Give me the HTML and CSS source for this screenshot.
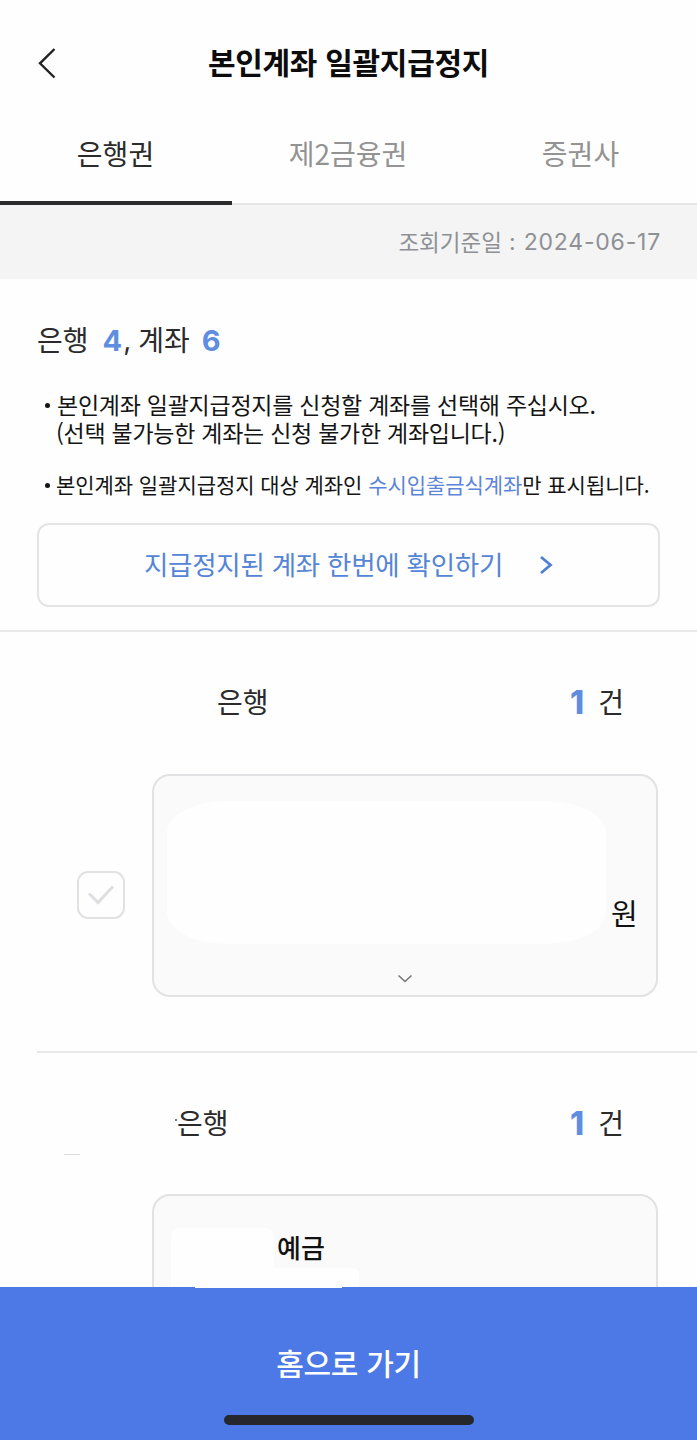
FILE: index.html
```html
<!DOCTYPE html>
<html lang="ko">
<head>
<meta charset="utf-8">
<title>본인계좌 일괄지급정지</title>
<link rel="stylesheet" href="styles.css">
</head>
<body>
<div class="screen">
  <header class="header">
    <svg class="back" width="20" height="32" viewBox="0 0 20 32"><path d="M17.5 2 3 16.3 17.5 30.5"/></svg>
    <h1 class="title">본인계좌 일괄지급정지</h1>
  </header>
  <nav class="tabs">
    <span class="tab tab-active">은행권</span>
    <span class="tab">제2금융권</span>
    <span class="tab">증권사</span>
  </nav>
  <div class="date-bar"><span>조회기준일</span><span class="date">: 2024-06-17</span></div>
  <section class="intro">
    <div class="summary"><span class="label">은행</span><b class="count">4</b><span class="comma">,</span><span class="label">계좌</span><b class="count count-last">6</b></div>
    <ul class="notes">
      <li class="note"><i class="dot"></i><div><p>본인계좌 일괄지급정지를 신청할 계좌를 선택해 주십시오.</p><p class="note-sub">(선택 불가능한 계좌는 신청 불가한 계좌입니다.)</p></div></li>
      <li class="note note-small"><i class="dot"></i><p>본인계좌 일괄지급정지 대상 계좌인 <span class="link">수시입출금식계좌</span>만 표시됩니다.</p></li>
    </ul>
    <a class="check-all">
      <span class="check-label">지급정지된 계좌 한번에 확인하기</span>
      <svg width="14" height="20" viewBox="0 0 14 20"><path d="M2 2 11.5 10 2 18"/></svg>
    </a>
  </section>
  <main class="banks">
    <section class="bank">
      <div class="bank-head"><span class="bank-name label">은행</span><b class="count bank-count">1</b><span class="label">건</span></div>
      <div class="account-row">
        <svg class="checkbox" width="48" height="48" viewBox="0 0 48 48"><rect x="1" y="1" width="46" height="46" rx="10"/><path d="M12 22.5 21 31.5 36 15.5"/></svg>
        <div class="card">
          <div class="blank"></div>
          <span class="won">원</span>
          <svg class="expand" width="16" height="10" viewBox="0 0 16 10"><path d="M1.5 1.5 8 7.5 14.5 1.5"/></svg>
        </div>
      </div>
    </section>
    <section class="bank bank-second">
      <div class="bank-head"><i class="speck"></i><span class="bank-name label">은행</span><b class="count bank-count">1</b><span class="label">건</span></div>
      <i class="sliver"></i>
      <div class="account-row">
        <div class="card">
          <div class="deposit"><div class="blank-name"></div><span>예금</span></div>
          <div class="blank-number"></div>
        </div>
      </div>
    </section>
  </main>
  <footer class="footer">
    <i class="edge"></i>
    <span class="home">홈으로 가기</span>
    <i class="indicator"></i>
  </footer>
</div>
</body>
</html>
```

FILE: styles.css
```css
* { box-sizing: border-box; margin: 0; padding: 0; }
body {
  background: #fefefe;
  color: #2b2b2b;
  font-family: "Noto Sans CJK KR", sans-serif;
  white-space: nowrap;
}
svg { display: block; flex: none; fill: none; }
.screen { width: 697px; height: 1440px; overflow: hidden; display: flex; flex-direction: column; }

.header { height: 128px; flex: none; display: grid; grid-template-columns: 60px 1fr 60px; align-items: center; padding-bottom: 2px; }
.back { margin-left: 37px; stroke: #222; stroke-width: 2.4; }
.title { text-align: center; font-size: 30px; font-weight: 700; line-height: 40px; letter-spacing: -.3px; color: #0c0c0c; padding-bottom: 4px; }

.tabs { height: 77px; flex: none; display: grid; grid-template-columns: 232px 1fr 232px; }
.tab { border-bottom: 2px solid #e6e6e6; padding: 4px 1px 0 0; text-align: center; font-size: 28px; line-height: 42px; color: #939393; }
.tab-active { color: #2b2b2b; border-bottom: 4px solid #2b2b2e; }

.date-bar { height: 74px; flex: none; background: #f4f4f4; padding: 0 36px 2px 0; display: flex; align-items: center; justify-content: flex-end; gap: 7px; font-size: 22.5px; color: #8e9094; }
.date { font-family: Inter, sans-serif; font-size: 23px; letter-spacing: .8px; padding-top: 2px; }

.intro { height: 353px; flex: none; padding: 40px 37px 0; border-bottom: 2px solid #e8e8e8; }
.summary { display: flex; align-items: center; height: 42px; font-size: 28px; line-height: 42px; }
.label { position: relative; top: -2px; }
.summary .label { top: -1px; }
.count { font: 700 29px/42px Inter, sans-serif; color: #5f8ee0; margin: 1px 0 0 14px; }
.count-last { margin-left: 12px; }
.comma { font-family: Inter, sans-serif; margin: 0 7px 0 1px; }
.notes { list-style: none; margin-top: 29px; color: #141414; }
.note { display: flex; font-size: 23px; line-height: 28px; letter-spacing: -.26px; padding-left: 8px; }
.note-sub { margin-left: -1px; }
.note-small { font-size: 21px; letter-spacing: -.06px; margin-top: 24px; }
.dot { width: 5px; height: 5px; border-radius: 50%; background: #141414; margin: 13px 7px 0 0; flex: none; }
.note-small .dot { margin-right: 6px; }
.link { color: #5c84d8; }
.check-all { margin-top: 25px; height: 84px; border: 2px solid #e4e4e4; border-radius: 12px; display: flex; align-items: center; justify-content: center; gap: 36px; font-size: 26.5px; letter-spacing: -.27px; color: #5585d6; }
.check-label { padding-bottom: 4px; }
.check-all svg { stroke: #4f7fd3; stroke-width: 2.8; }

.banks { flex: 1; min-height: 0; overflow: hidden; }
.bank { height: 419px; }
.bank-second { margin-left: 37px; border-top: 2px solid #e8e8e8; }
.bank-head { height: 142px; display: flex; align-items: center; padding: 0 73px 0 217px; font-size: 28px; }
.bank-name { flex: 1; }
.bank-count { font-size: 32px; font-weight: 800; margin: 0 14px 0 0; }
.account-row { display: flex; align-items: center; padding-left: 77px; }
.checkbox { margin: 18px 27px 0 0; stroke: #e2e2e4; stroke-width: 2; }
.checkbox path { stroke-width: 3; stroke: #dedfe2; }
.card { width: 506px; height: 223px; flex: none; border: 2px solid #e2e2e4; border-radius: 18px; background: #fafafa; display: grid; grid-template-columns: 439px 1fr; grid-template-rows: 143px auto; padding: 25px 0 0 13px; }
.blank { background: #fefefe; border-radius: 60px / 32px; }
.won { font-size: 29px; line-height: 40px; padding: 91px 0 0 5px; color: #111; }
.expand { grid-column: 1 / 3; margin: 30px 0 0 230px; stroke: #777; stroke-width: 1.6; }

.bank-second .bank-head { height: 141px; padding-left: 138px; }
.speck { width: 2px; height: 2px; background: #777; margin: -8px 0 0 0; }
.sliver { display: block; width: 16px; height: 1px; background: #ddd; margin: -40px 0 39px 27px; }
.bank-second .account-row { padding-left: 115px; }
.bank-second .card { display: block; padding: 32px 0 0 17px; }
.deposit { display: flex; height: 40px; gap: 3px; font-size: 26px; line-height: 37px; font-weight: 500; color: #111; }
.blank-name { width: 103px; height: 40px; background: #fefefe; border-radius: 8px 8px 0 0; }
.blank-number { width: 188px; height: 40px; background: #fefefe; border-radius: 0 6px 0 0; }

.footer { height: 153px; flex: none; background: #4d79e6; display: flex; flex-direction: column; align-items: center; }
.edge { align-self: flex-start; width: 147px; height: 1px; margin-left: 195px; background: #fefefe; }
.home { margin-top: 53px; font-size: 30px; line-height: 42px; letter-spacing: -.3px; font-weight: 500; color: #fff; }
.indicator { width: 250px; height: 10px; border-radius: 5px; background: #26272d; margin-top: 32px; }
```
